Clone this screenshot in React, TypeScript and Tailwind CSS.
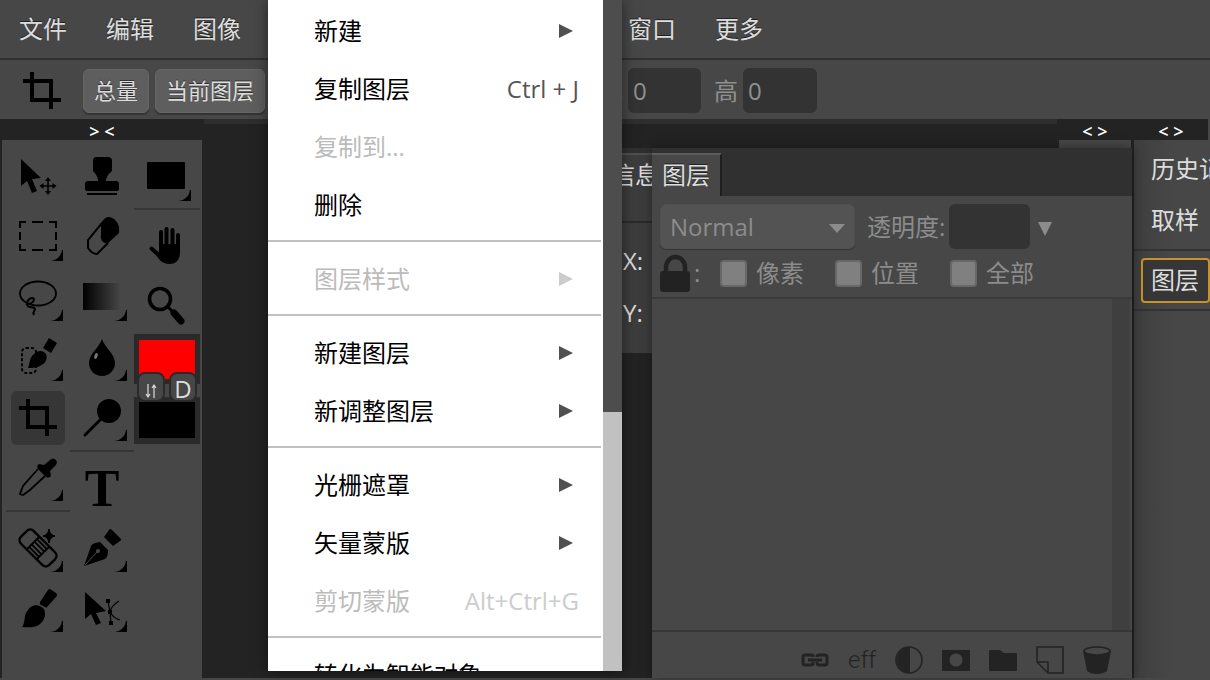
import { useState, type ReactNode } from "react";
import clsx from "clsx";

type Tool = {
  id: string;
  label: string;
  more?: boolean;
  icon: ReactNode;
};

type MenuEntry =
  | { kind: "sep" }
  | { kind: "item"; label: string; keys?: string; sub?: boolean; off?: boolean };

const MENUS = ["文件", "编辑", "图像", "图层", "选择", "滤镜", "视图", "窗口", "更多"];

const LAYER_MENU: MenuEntry[] = [
  { kind: "item", label: "新建", sub: true },
  { kind: "item", label: "复制图层", keys: "Ctrl + J" },
  { kind: "item", label: "复制到...", off: true },
  { kind: "item", label: "删除" },
  { kind: "sep" },
  { kind: "item", label: "图层样式", sub: true, off: true },
  { kind: "sep" },
  { kind: "item", label: "新建图层", sub: true },
  { kind: "item", label: "新调整图层", sub: true },
  { kind: "sep" },
  { kind: "item", label: "光栅遮罩", sub: true },
  { kind: "item", label: "矢量蒙版", sub: true },
  { kind: "item", label: "剪切蒙版", keys: "Alt+Ctrl+G", off: true },
  { kind: "sep" },
  { kind: "item", label: "转化为智能对象" },
];

const CROP_PATH = "M22 11V39H51M13 20H41V48";

// Tool glyphs are drawn on a 64x60 cell
const COL_A: Tool[] = [
  {
    id: "move",
    label: "移动",
    icon: (
      <>
        <path d="M15 11V38L21 33L26 45L31 43L26 31L35 30Z" />
        <path d="M42 31V45M35 38H49" stroke="black" strokeWidth="1.6" />
        <path d="M42 29l3 4h-6zM42 47l3-4h-6zM33.500 38l4-3v6zM50.500 38l-4-3v6z" />
      </>
    ),
  },
  {
    id: "marquee",
    label: "矩形选框",
    more: true,
    icon: (
      <path
        d="M14 20V14H20M26 14H37M43 14H50V20M50 24V32M50 36V42H43M37 42H26M20 42H14V36M14 32V24"
        fill="none"
        stroke="black"
        strokeWidth="2"
      />
    ),
  },
  {
    id: "lasso",
    label: "套索",
    more: true,
    icon: (
      <g fill="none" stroke="black" strokeWidth="1.8">
        <ellipse cx="32" cy="25.500" rx="18" ry="12" />
        <path d="M20 36C24 37 28 34 28 31C26 28 21 32 21 36C21 41 28 38 29 41C29 44 26 43 28 47" strokeWidth="2" />
      </g>
    ),
  },
  {
    id: "quick",
    label: "快速选择",
    more: true,
    icon: (
      <>
        <rect x="16" y="20" width="14" height="25" rx="4" fill="none" stroke="black" strokeWidth="2" strokeDasharray="3 2" />
        <path d="M22 40C24 36 23 30 28 26C32 22 37 22 40 26C42 31 39 36 34 38C30 40 25 40 22 40Z" />
        <path d="M43 10L51 15L45 25L37 20Z" strokeLinejoin="round" />
      </>
    ),
  },
  {
    id: "crop",
    label: "裁剪",
    icon: <path d={CROP_PATH} fill="none" stroke="black" strokeWidth="4" />,
  },
  {
    id: "picker",
    label: "吸管",
    more: true,
    icon: (
      <>
        <path d="M44 12Q47 9 50 12Q52 15 49 18L44 23L45 28Q42 31 39 28L32 21Q30 18 33 16L38 17Z" />
        <path d="M32 21L17 38L14 46L17 47L24 42L39 28" fill="none" stroke="black" strokeWidth="1.8" />
      </>
    ),
  },
];

const COL_A_LOWER: Tool[] = [
  {
    id: "heal",
    label: "修复",
    more: true,
    icon: (
      <>
        <g transform="rotate(45 32 29)" fill="none" stroke="black">
          <rect x="12" y="20" width="40" height="18" rx="5" strokeWidth="2.4" />
          <path d="M25 20V38M39 20V38" strokeWidth="2" />
          <path d="M25 23.500H39M25 27H39M25 31H39M25 34.500H39" strokeWidth="1.8" />
        </g>
        <path d="M43 10Q44 16 49 17Q44 18 43 24Q42 18 37 17Q42 16 43 10Z" stroke="black" />
      </>
    ),
  },
  {
    id: "brush",
    label: "画笔",
    more: true,
    icon: (
      <>
        <path d="M16 48C20 44 17 36 22 31C26 25 33 25 38 30C41 37 37 44 31 47C26 49 20 48 16 48Z" />
        <path d="M42 11Q43 10 44 10L50 14Q52 16 50 18L41 28Q40 29 39 28L35 26Q33 25 34 23Z" />
      </>
    ),
  },
];

const COL_B: Tool[] = [
  {
    id: "stamp",
    label: "图章",
    icon: (
      <>
        <path d="M26 9H38Q42 9 42 13V23Q36 28 36 33H46Q49 33 49 36V41Q49 43 47 43H17Q15 43 15 41V36Q15 33 18 33H28Q28 28 23 23V13Q23 9 26 9Z" />
        <path d="M17 46H47" stroke="black" strokeWidth="2" />
      </>
    ),
  },
  {
    id: "eraser",
    label: "橡皮擦",
    icon: (
      <>
        <path d="M38 9Q43 9 46 13Q50 17 49 25L37 36L33 34Q30 31 31 27V15Q35 9 38 9Z" />
        <path d="M32 15L18 32V40Q22 46 27 46L38 35" fill="none" stroke="black" strokeWidth="2" />
      </>
    ),
  },
  {
    id: "gradient",
    label: "渐变",
    more: true,
    icon: (
      <>
        <defs>
          <linearGradient id="fade">
            <stop offset="0" stopColor="#000" />
            <stop offset="1" stopColor="#474747" />
          </linearGradient>
        </defs>
        <rect x="13" y="15" width="38" height="27" fill="url(#fade)" />
      </>
    ),
  },
  {
    id: "blur",
    label: "模糊",
    more: true,
    icon: (
      <>
        <path d="M32 11C35 20 45 26 45 35A13 13 0 0 1 19 35C19 26 29 20 32 11Z" />
        <ellipse cx="26" cy="28" rx="1.600" ry="3" transform="rotate(20 26 28)" fill="#777" />
      </>
    ),
  },
  {
    id: "dodge",
    label: "减淡",
    more: true,
    icon: (
      <>
        <circle cx="39" cy="23" r="12" />
        <path d="M31 31L15 47" stroke="black" strokeWidth="3" strokeLinecap="round" />
      </>
    ),
  },
];

const COL_B_LOWER: Tool[] = [
  {
    id: "pen",
    label: "钢笔",
    more: true,
    icon: (
      <>
        <path d="M14 47L21 27Q22 24 30 23L38 31Q38 38 35 40Z" />
        <path d="M15 46L27 33" stroke="#474747" strokeWidth="1" />
        <circle cx="28" cy="32" r="2" fill="#474747" />
        <path d="M39 11Q40 9 42 11L50 19Q52 21 50 22L43 27L34 18Z" />
      </>
    ),
  },
  {
    id: "path",
    label: "路径选择",
    more: true,
    icon: (
      <>
        <path d="M15 13V40L21 35L26 46L31 44L26 34L36 32Z" />
        <path d="M38 22L40 33L41 44M49 22Q41 27 40 33Q43 39 50 41" fill="none" stroke="black" strokeWidth="1.2" />
        <path d="M36 20h4v4h-4zM38 31h4v4h-4zM39 42h4v4h-4z" />
      </>
    ),
  },
];

const COL_C_LOWER: Tool[] = [
  {
    id: "hand",
    label: "抓手",
    icon: (
      <>
        <path
          d="M27 18V32M32.500 15V30M38.500 16V30M44 21V34M17.500 34.500L27 43"
          fill="none"
          stroke="black"
          strokeWidth="4"
          strokeLinecap="round"
        />
        <path d="M25 30H46V38C46 46 42 50 36 50C29 50 26 47 22 41L25 40Z" />
      </>
    ),
  },
  {
    id: "zoom",
    label: "缩放",
    icon: (
      <>
        <circle cx="26" cy="25" r="10.500" fill="none" stroke="black" strokeWidth="3.600" />
        <path d="M33 32L39 38" stroke="black" strokeWidth="3" />
        <path d="M40 39L47 47" stroke="black" strokeWidth="7" strokeLinecap="round" />
      </>
    ),
  },
];

const SHAPE: Tool = {
  id: "shape",
  label: "矩形",
  more: true,
  icon: <rect x="13" y="14" width="38" height="27" rx="1" />,
};

export default function App() {
  const [tool, setTool] = useState("crop");

  return (
    <div className="relative flex h-screen flex-col overflow-hidden bg-[#474747] pb-[2px] font-['Open_Sans','Noto_Sans_CJK_SC',sans-serif] text-2xl text-[#dddddd]">
      <nav className="flex h-[60px] shrink-0 items-center gap-[39px] border-b-2 border-[#303030] px-[19px]">
        {MENUS.map((m) => (
          <button key={m} className="shrink-0 whitespace-nowrap [text-shadow:0_-1px_0_#222]">
            {m}
          </button>
        ))}
      </nav>

      <OptionsBar />

      <div className="relative flex min-h-0 flex-1 bg-[#232323]">
        <aside className="flex w-[204px] shrink-0 flex-col px-[2px]">
          <Expander text="> <" />
          <div className="flex flex-1 bg-[#474747] pt-2 pl-1">
            <div className="w-16">
              <ToolList tools={COL_A} active={tool} onPick={setTool} />
              <div className="h-[11px] pt-[2px]">
                <Rule />
              </div>
              <ToolList tools={COL_A_LOWER} active={tool} onPick={setTool} />
            </div>
            <div className="w-16">
              <ToolList tools={COL_B} active={tool} onPick={setTool} />
              <div className="h-[11px] pt-[2px]">
                <Rule />
              </div>
              <button
                onClick={() => setTool("type")}
                className="flex h-[60px] w-16 items-center justify-center font-['Liberation_Serif',serif] text-[52px] leading-[56px] font-bold text-black"
              >
                T
              </button>
              <ToolList tools={COL_B_LOWER} active={tool} onPick={setTool} />
            </div>
            <div className="w-[66px]">
              <ToolList tools={[SHAPE]} active={tool} onPick={setTool} />
              <div className="h-[6px]">
                <Rule />
              </div>
              <ToolList tools={COL_C_LOWER} active={tool} onPick={setTool} />
              <Swatches />
            </div>
          </div>
        </aside>

        <main className="flex-1 border-t-[5px] border-[#2e2e2e]" />

        <aside className="flex w-[76px] shrink-0 flex-col px-[2px]">
          <Expander text="< >" />
          <div className="flex-1 bg-[#474747]" />
        </aside>

        <SideTabs />

        {/* Floating panels opened from the collapsed column */}
        <div className="absolute top-[29px] right-[78px] bottom-0 flex items-start">
          <InfoPanel />
          <LayersPanel />
        </div>
      </div>

      <LayerMenu />
    </div>
  );
}

function OptionsBar() {
  return (
    <div className="flex h-[59px] shrink-0 items-center pt-[2px] text-[22px] text-[#909090]">
      <svg viewBox="0 0 64 60" className="ml-[10px] h-[60px] w-16 shrink-0" fill="none" stroke="black" strokeWidth="4">
        <path d={CROP_PATH} />
      </svg>
      <div className="ml-[9px] flex shrink-0 gap-[6px]">
        {["总量", "当前图层"].map((t) => (
          <button
            key={t}
            className="h-11 rounded-md border border-[#666666] bg-[#5e5e5e] px-[10px] text-[#dddddd] shadow-[0_2px_1px_#333] [text-shadow:0_-1px_0_#333]"
          >
            {t}
          </button>
        ))}
      </div>
      <select aria-label="比例" className="mx-3 h-11 w-[310px] rounded-md bg-[#5e5e5e]" />
      <label className="flex items-center gap-[5px] text-2xl">
        宽
        <input defaultValue="0" className="h-[45px] w-[73px] rounded-md bg-[#333333] px-[5px]" />
      </label>
      <label className="ml-[13px] flex items-center gap-[5px] text-2xl">
        高
        <input defaultValue="0" className="h-[45px] w-[74px] rounded-md bg-[#333333] px-[5px]" />
      </label>
    </div>
  );
}

function Expander({ text }: { text: string }) {
  return (
    <button className="flex h-[21px] w-full shrink-0 items-center justify-center bg-[#232323] pt-[2px] text-lg leading-none font-semibold text-white">
      {text}
    </button>
  );
}

function Rule() {
  return <div className="h-[2px] bg-[#363636]" />;
}

function ToolList({ tools, active, onPick }: { tools: Tool[]; active: string; onPick: (id: string) => void }) {
  return (
    <>
      {tools.map((t) => (
        <button
          key={t.id}
          aria-label={t.label}
          onClick={() => onPick(t.id)}
          className="flex h-[60px] w-16 items-center justify-center"
        >
          <span
            className={clsx(
              "flex h-[54px] w-[54px] items-center justify-center rounded-md",
              active === t.id && "bg-[#363636]"
            )}
          >
            <svg viewBox="0 0 64 60" className="h-[60px] w-16 shrink-0">
              {t.icon}
              {t.more && <path d="M45 53Q55 51 56 42H57V53Z" />}
            </svg>
          </span>
        </button>
      ))}
    </>
  );
}

function Swatches() {
  return (
    <div className="relative flex h-[110px] flex-col bg-[#2a2a2a] px-[5px] py-[6px]">
      <button aria-label="前景色" className="h-[39px] bg-[#ff0000]" />
      <div className="-mx-[5px] my-[5px] h-[13px] bg-[#474747]" />
      <button aria-label="背景色" className="flex-1 bg-black" />
      <div className="absolute inset-x-[3px] top-[38px] flex justify-between">
        <button
          aria-label="交换颜色"
          className="flex h-[30px] w-[28px] items-center justify-center rounded-lg border-2 border-[#2a2a2a] bg-[#474747]"
        >
          <svg viewBox="0 0 12 16" className="mt-2 h-4 w-3" fill="none" stroke="#dddddd" strokeWidth="1.2">
            <path d="M3 1V14M1 11L3 14L5 11M9 15V2M7 5L9 2L11 5" />
          </svg>
        </button>
        <button className="flex h-[30px] w-[28px] items-center justify-center rounded-lg border-2 border-[#2a2a2a] bg-[#474747] pt-1 text-2xl leading-none">
          D
        </button>
      </div>
    </div>
  );
}

function InfoPanel() {
  return (
    <section className="h-[205px] w-[52px] overflow-hidden bg-[#303030] pt-[5px] whitespace-nowrap">
      <div className="h-[43px] border-t-2 border-[#505050] bg-[#3d3d3d] pl-[11px] leading-10">信息</div>
      <div className="h-[27px] border-b-2 border-[#2b2b2b] bg-[#3d3d3d]" />
      <div className="flex h-[130px] flex-col gap-4 bg-[#3d3d3d] pt-5 pl-[23px]">
        <span className="leading-9">X:</span>
        <span className="leading-9">Y:</span>
      </div>
    </section>
  );
}

function LayersPanel() {
  return (
    <section className="flex h-full w-[480px] flex-col bg-[#474747] text-[#8c8c8c] shadow-[0_0_12px_rgba(0,0,0,0.4)]">
      <header className="flex h-12 shrink-0 items-end bg-[#303030]">
        <button className="h-[43px] border-t-2 border-r-2 border-t-[#5c5c5c] border-r-[#1f1f1f] bg-[#474747] px-[10px] pb-[2px] leading-9 text-[#dddddd] [text-shadow:0_-1px_0_#222]">
          图层
        </button>
      </header>

      <div className="flex shrink-0 items-center gap-3 px-2 pt-2">
        <div className="relative">
          <select
            aria-label="混合模式"
            className="h-[45px] w-[195px] appearance-none rounded-md border border-[#505050] bg-[#535353] px-[9px] shadow-[0_1px_1px_#333]"
          >
            <option>Normal</option>
          </select>
          <svg viewBox="0 0 16 9" className="pointer-events-none absolute top-5 right-[10px] h-[9px] w-4" fill="#8c8c8c">
            <path d="M0 0H16L8 9Z" />
          </svg>
        </div>
        <label className="flex items-center gap-1">
          透明度:
          <input className="h-[45px] w-[81px] rounded-md bg-[#333333] px-[5px]" />
          <svg viewBox="0 0 14 14" className="mt-1 ml-1 h-[14px] w-[14px]" fill="#8c8c8c">
            <path d="M0 0H14L7 14Z" />
          </svg>
        </label>
      </div>

      <div className="flex h-[50px] shrink-0 items-center border-b-2 border-[#3a3a3a] px-2">
        <svg viewBox="0 0 30 38" className="h-[38px] w-[30px]">
          <path d="M6 19V13A9.500 10 0 0 1 25 13V19" fill="none" stroke="#222" strokeWidth="4.500" />
          <rect y="17" width="30" height="21" rx="3" fill="#222" />
        </svg>
        <span className="ml-1 w-[26px]">:</span>
        <div className="flex gap-[31px]">
          {["像素", "位置", "全部"].map((t) => (
            <label key={t} className="flex items-center gap-[9px]">
              <input
                type="checkbox"
                className="h-[27px] w-[27px] appearance-none rounded-sm border-2 border-[#686868] bg-[#808080] checked:bg-[#b0b0b0]"
              />
              {t}
            </label>
          ))}
        </div>
      </div>

      <div className="flex min-h-0 flex-1 justify-end pr-[2px]">
        <div className="w-[18px] bg-[#3f3f3f]" />
      </div>

      <footer className="flex h-12 shrink-0 items-center justify-end gap-[19px] border-t-2 border-[#363636] pt-[10px] pr-[21px] text-[#232323]">
        <FooterButton label="链接图层">
          <g fill="none" stroke="currentColor" strokeWidth="3">
            <path d="M12 11V10Q12 9 10 9H4Q2 9 2 11V17Q2 19 4 19H10Q12 19 12 17V16" />
            <path d="M16 11V10Q16 9 18 9H24Q26 9 26 11V17Q26 19 24 19H18Q16 19 16 17V16" />
            <path d="M7 14H21" />
          </g>
        </FooterButton>
        <button className="w-7 text-center font-['Roboto',sans-serif] leading-7 font-light">eff</button>
        <FooterButton label="调整图层">
          <circle cx="14" cy="14" r="13" fill="none" stroke="currentColor" strokeWidth="1.6" />
          <path d="M15 1A13 13 0 0 0 15 27Z" />
        </FooterButton>
        <FooterButton label="图层蒙版">
          <path fillRule="evenodd" d="M0 4H28V25H0ZM14 7.500a6.500 6.500 0 1 0 .01 0Z" />
        </FooterButton>
        <FooterButton label="新建文件夹">
          <path d="M1 4H11L15 7H27Q28 7 28 8V24Q28 25 27 25H1Q0 25 0 24V5Q0 4 1 4Z" />
        </FooterButton>
        <FooterButton label="新建空白图层">
          <path d="M1 1H27V27H12L1 16ZM1 16H12V27" fill="none" stroke="currentColor" strokeWidth="1.6" />
        </FooterButton>
        <FooterButton label="删除图层">
          <path d="M0 5L4 25Q8 28 14 28Q20 28 24 25L28 5Z" />
          <ellipse cx="14" cy="5" rx="13" ry="4" fill="#474747" stroke="currentColor" strokeWidth="1.6" />
        </FooterButton>
      </footer>
    </section>
  );
}

function FooterButton({ label, children }: { label: string; children: ReactNode }) {
  return (
    <button aria-label={label}>
      <svg viewBox="0 0 28 28" className="h-7 w-7" fill="currentColor">
        {children}
      </svg>
    </button>
  );
}

function SideTabs() {
  return (
    <aside className="flex w-[77px] shrink-0 flex-col overflow-hidden pl-[1px]">
      <div className="border-r-2 border-[#474747]">
        <Expander text="< >" />
      </div>
      <div className="flex-1 bg-gradient-to-r from-[#3e3e3e] to-[#474747] to-50%">
        <div className="flex flex-col gap-[6px] border-b-2 border-[#333333] pt-[7px] pb-[6px] pl-[7px]">
          <SideTab text="历史记录" />
          <SideTab text="取样" />
        </div>
        <div className="border-b-2 border-[#333333] pt-[7px] pb-[6px] pl-[7px]">
          <SideTab text="图层" active />
        </div>
      </div>
    </aside>
  );
}

function SideTab({ text, active }: { text: string; active?: boolean }) {
  return (
    <button
      className={clsx(
        "h-[45px] w-full rounded-sm border-2 px-2 pb-[2px] text-left whitespace-nowrap",
        active ? "border-[#c8922a] bg-[#363636]" : "border-transparent"
      )}
    >
      {text}
    </button>
  );
}

function LayerMenu() {
  return (
    <div className="absolute top-0 bottom-[9px] left-[268px] flex w-[354px] bg-white text-black shadow-[0_0_14px_rgba(0,0,0,0.5)]">
      <div role="menu" className="flex-1 overflow-hidden pt-[2px]">
        {LAYER_MENU.map((e, i) =>
          e.kind === "sep" ? (
            <div key={i} className="mr-[2px] h-4 pt-[6px]">
              <div className="h-[2px] bg-[#c0c0c0]" />
            </div>
          ) : (
            <button
              key={i}
              role="menuitem"
              disabled={e.off}
              className="flex h-[58px] w-full items-center justify-between pr-6 pl-[46px] disabled:text-[#bbbbbb]"
            >
              {e.label}
              {e.keys && <span className={e.off ? "text-[#cccccc]" : "text-[#555555]"}>{e.keys}</span>}
              {e.sub && (
                <svg viewBox="0 0 14 14" className="mr-[6px] h-[14px] w-[14px]" fill={e.off ? "#cccccc" : "#505050"}>
                  <path d="M0 0L14 7L0 14Z" />
                </svg>
              )}
            </button>
          )
        )}
      </div>
      {/* Scrollbar */}
      <div className="w-[19px] bg-[#c1c1c1]">
        <div className="h-[61.4%] bg-[#4d4d4d]" />
      </div>
    </div>
  );
}
